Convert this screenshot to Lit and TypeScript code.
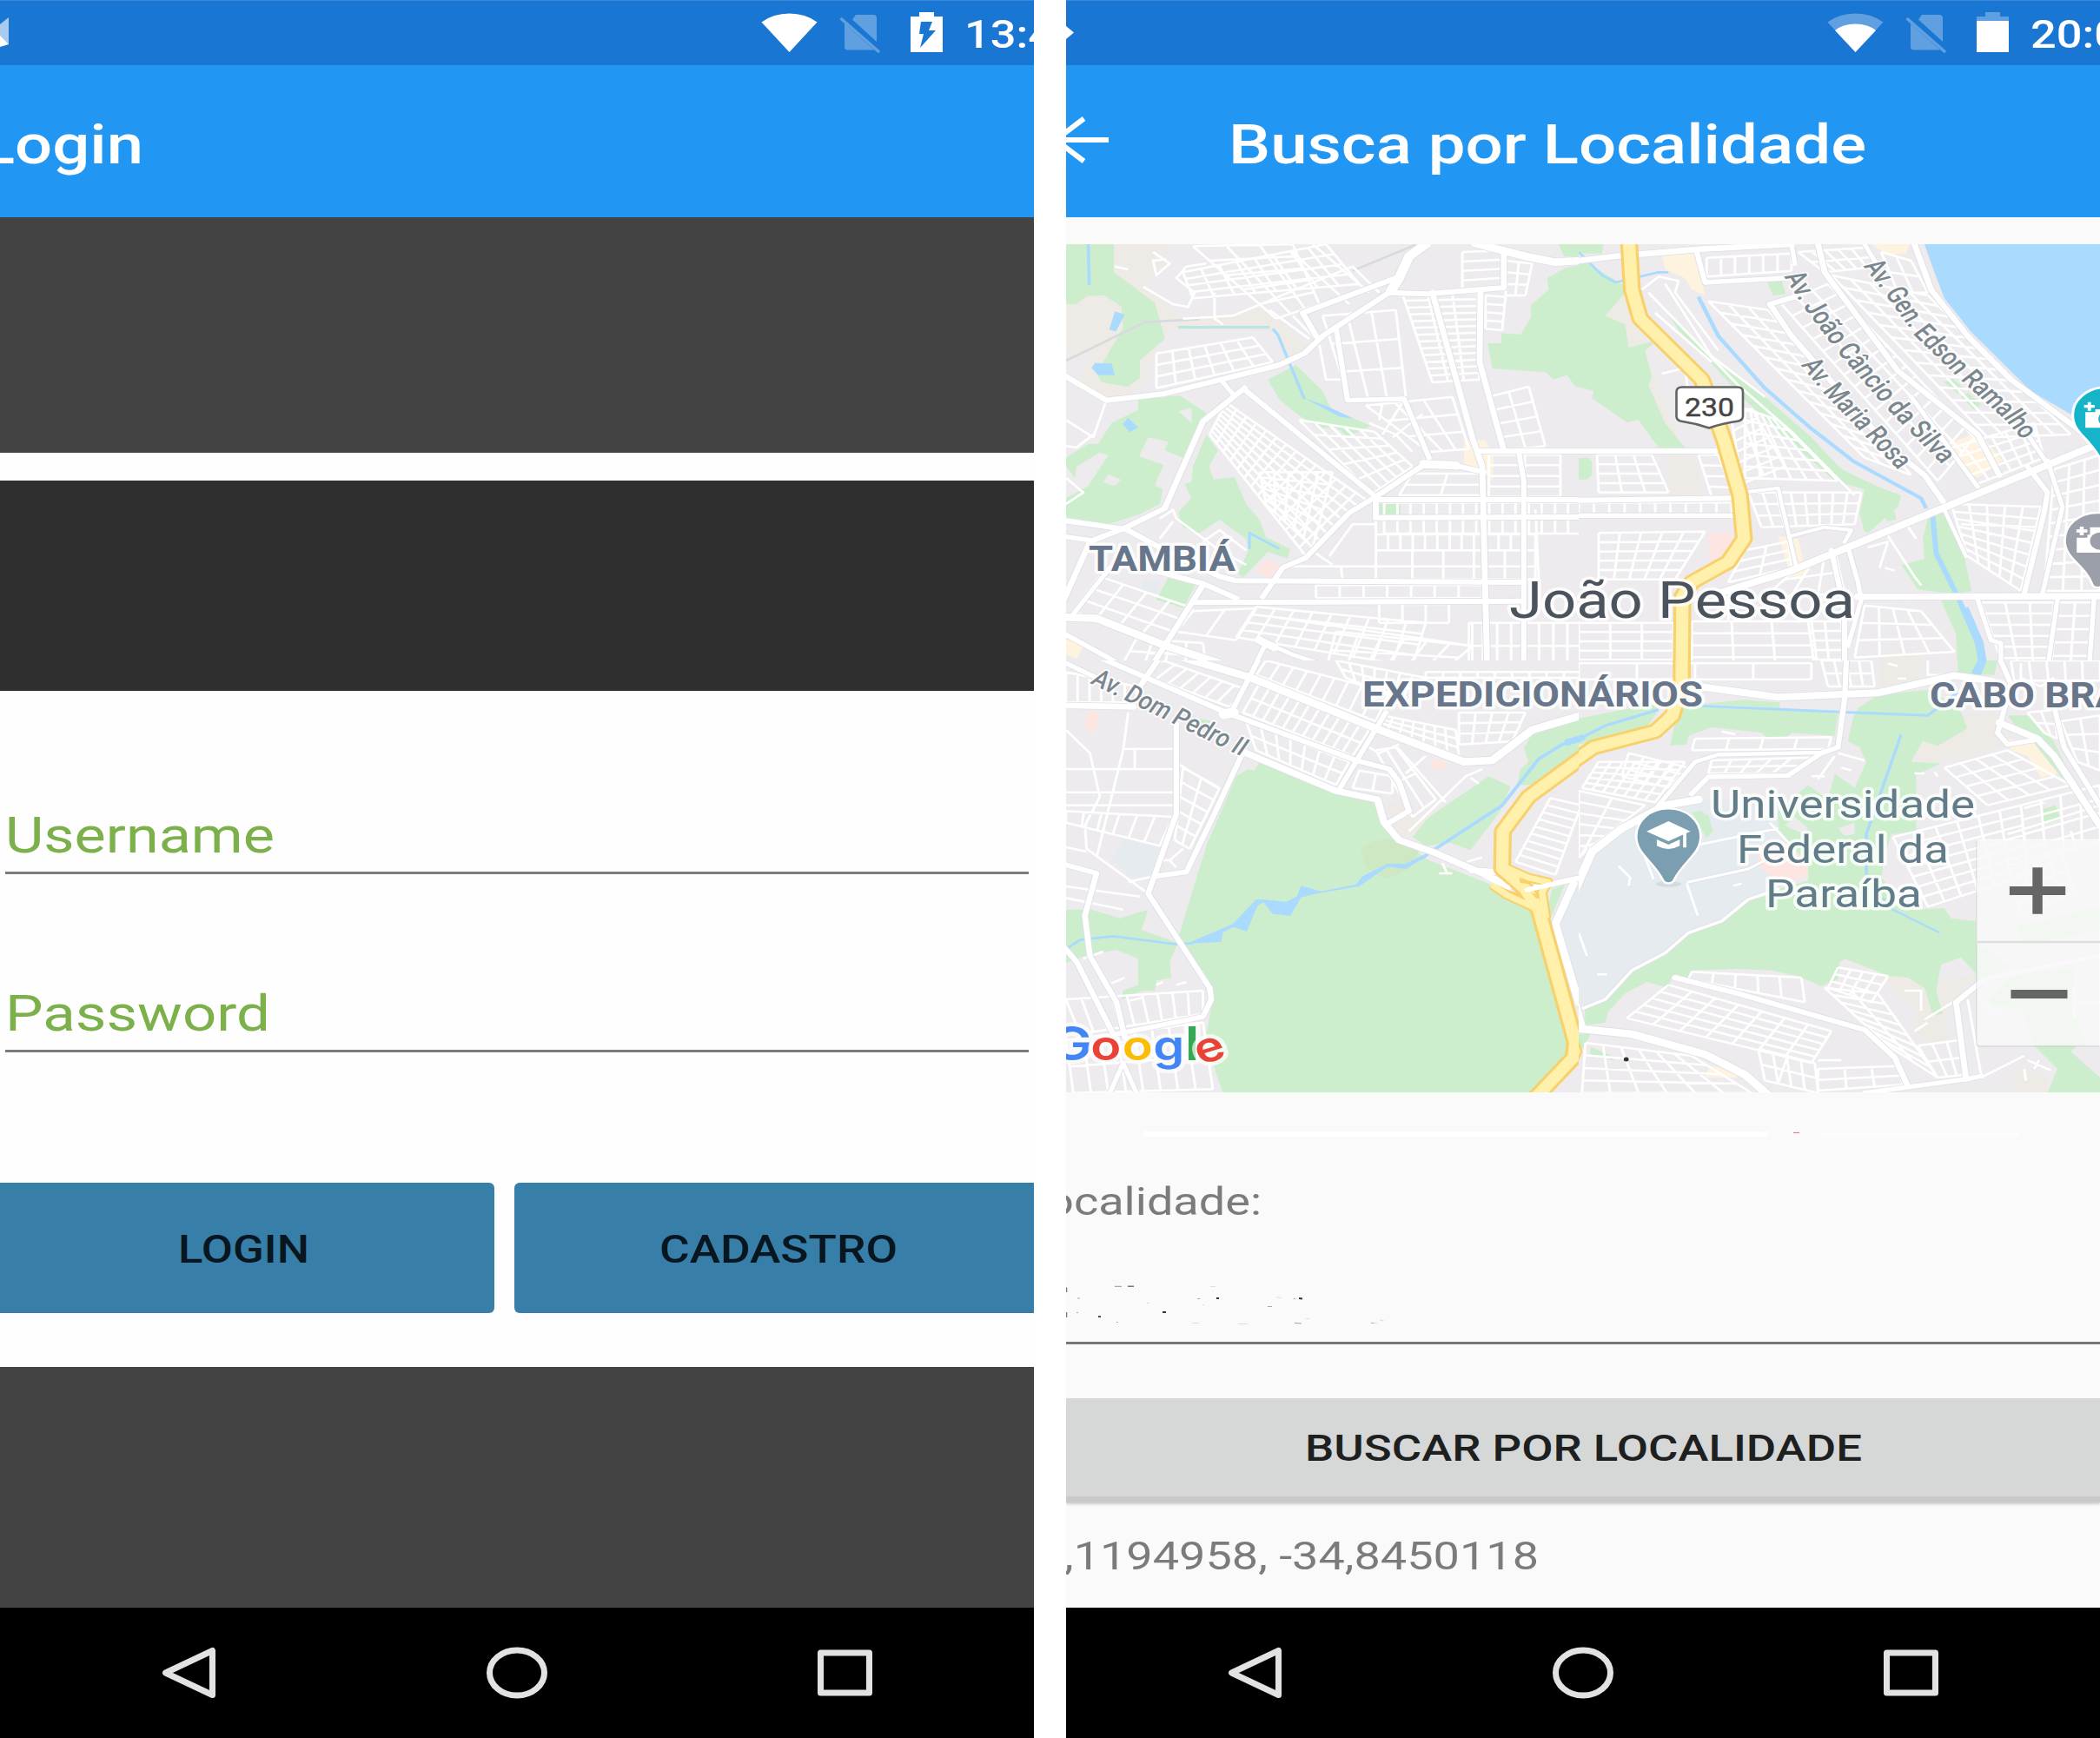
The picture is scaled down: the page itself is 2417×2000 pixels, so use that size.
import { LitElement, html, svg, css } from "lit";
import { customElement, property } from "lit/decorators.js";

/* ---------- street-map geometry ---------- */

type Shape = [string, string]; // fill, points
type Line = [number, string]; // width, points
type Quad = number[]; // 4 corners, rows, columns

interface Tile {
  x: number;
  y: number;
  areas: Shape[];
  water: Line[];
  highway: string[];
  roads: Line[];
  lanes: string[];
  grids: Quad[];
}

const GREEN = "#cdeecd";
const SAND = "#eeebe6";
const SEA = "#abdaff";
const CAMPUS = "#e5ebee";
const PINK = "#fde6e1";
const PEACH = "#fef3df";

const gridPath = (q: Quad): string => {
  const [ax, ay, bx, by, cx, cy, dx, dy, rows, cols] = q;
  const at = (u: number, v: number) => {
    const x = (1 - v) * ((1 - u) * ax + u * bx) + v * ((1 - u) * dx + u * cx);
    const y = (1 - v) * ((1 - u) * ay + u * by) + v * ((1 - u) * dy + u * cy);
    return `${x.toFixed(0)} ${y.toFixed(0)}`;
  };
  let d = "";
  for (let i = 0; i <= rows; i++) d += `M${at(0, i / rows)}L${at(1, i / rows)}`;
  for (let j = 0; j <= cols; j++) d += `M${at(j / cols, 0)}L${at(j / cols, 1)}`;
  return d;
};

const TILES: Tile[] = [
  {
    x: 1220, y: 270,
    areas: [
      [SAND, "162,33 320,33 320,100 250,180 330,240 370,290 520,270 620,250 740,380 700,440 650,335 330,325 300,370 260,500 220,545 140,560 50,500 95,430 140,400 18,430 18,240 100,200"],
      [GREEN, "18,33 162,33 162,130 285,235 316,360 240,435 240,495 205,525 125,510 110,480 190,320 185,250 135,210 80,212 50,240 18,240"],
      [GREEN, "235,570 360,555 440,615 400,720 370,770 315,745 325,715 265,700 238,765 312,795 285,865 310,880 300,930 240,965 150,998 18,975 18,910 85,868 145,762 120,752 50,800 45,840 18,800 18,770 85,722 115,722 155,650 235,605"],
      ["#edebee", "355,610 395,597 397,650"],
      ["#edebee", "145,828 183,845 165,868 130,855"],
      [GREEN, "440,690 475,745 448,800 462,845 525,838 560,930 600,985 620,1045 692,1085 685,1118 625,1095 580,1150 550,1185 535,1170 567,1090 560,1050 480,985 420,1030 370,1010 355,960 395,910 375,860 395,855 400,800"],
      [GREEN, "625,500 710,450 790,540 815,600 935,660 865,698 830,665 780,668 720,625 660,570"],
      [GREEN, "960,930 1024,930 1024,968 960,968"],
      [GREEN, "325,1185 408,1210 370,1290 290,1260"],
      [GREEN, "1568,105 1520,115 1465,150 1470,190 1415,245 1418,285 1385,345 1328,340 1328,375 1287,375 1300,462 1460,475 1485,500 1525,485 1550,525 1568,530"],
      [GREEN, "1500,33 1568,33 1568,75 1515,75"],
      [SEA, "165,265 195,275 168,335 148,328"],
      [SEA, "105,443 155,445 165,485 115,485 95,460"],
      [SEA, "205,632 235,665 210,682 188,655"],
      [SEA, "735,565 800,590 885,637 840,628"],
      [PINK, "625,1118 662,1145 630,1185 590,1160"],
      [PEACH, "1215,710 1280,710 1305,770 1300,850 1280,830 1215,790"],
      [PEACH, "18,1400 40,1385 75,1410 50,1465 18,1450"],
      [CAMPUS, "250,1190 300,1195 290,1240 245,1250"],
    ],
    water: [
      [10, "85,33 88,175"],
      [8, "570,1085 570,1030 660,1085"],
      [9, "640,325 655,345 735,568"],
    ],
    highway: [],
    roads: [
      [18, "18,490 140,572 310,550 660,450 735,410 790,350 990,200 1100,205 1335,183 1335,60"],
      [30, "995,195 1020,150 1050,75 1100,33"],
      [18, "1010,150 730,270 770,350"],
      [26, "1250,30 1400,75 1490,95 1568,90"],
      [18, "555,530 430,645 315,945 200,1010 90,1060 0,1290"],
      [18, "0,985 200,1018 300,1080 480,1180 530,1195 1390,1200"],
      [16, "0,1040 90,1055"],
      [17, "555,535 950,905 870,960 740,1115 670,1150 610,1250"],
      [18, "950,905 1100,790"],
      [28, "1095,792 1190,797"],
      [18, "1190,797 1275,820"],
      [18, "950,915 1568,915"],
      [18, "950,905 950,977 1568,975"],
      [16, "830,320 865,572 1035,567 1110,770"],
      [18, "1120,200 1240,700 1270,800 1285,1500"],
      [18, "1265,190 1262,440 1335,745"],
      [18, "1265,747 1568,747"],
      [16, "1380,750 1395,850 1395,1500"],
      [18, "400,1270 1390,1265"],
      [18, "430,1210 270,1500"],
      [18, "300,1165 430,1205 530,1255"],
      [26, "0,1320 110,1325 320,1420 560,1510"],
      [16, "0,1370 200,1495"],
      [14, "150,1150 40,1310"],
      [14, "580,1500 620,1410 700,1450 830,1500"],
      [26, "600,1400 645,1425"],
      [14, "490,510 520,550"],
    ],
    lanes: [
      "250,180 340,240 385,250 405,200 350,150 380,110 440,100",
      "370,290 520,280 740,175 880,110", "465,200 465,290 490,310",
      "630,260 750,360", "700,280 760,350", "780,380 800,500 860,500",
      "18,640 100,700 140,570", "18,730 50,735 100,690", "18,840 70,890 18,930",
      "280,60 330,100 290,140 280,90 320,85", "165,110 205,120", "880,110 960,200",
      "300,980 340,950 350,980 480,1090 560,1140", "340,990 300,1050", "430,1060 480,1020 560,1090",
      "810,1110 880,1000 950,1000", "670,1145 1440,1145", "845,1145 850,1195", "770,1100 820,1140",
      "950,990 950,1190", "700,60 870,240", "760,33 930,200",
      "930,650 1010,690 1060,750", "970,580 960,640", "1030,580 970,690", "1090,620 1000,700",
      "1430,950 1440,1190", "1240,1340 1240,1500", "640,1320 1240,1420",
    ],
    grids: [
      [370, 130, 800, 33, 900, 170, 400, 220, 4, 8],
      [400, 40, 700, 33, 780, 240, 650, 290, 5, 3],
      [290, 410, 580, 355, 640, 440, 290, 530, 3, 6],
      [500, 580, 920, 915, 740, 1110, 450, 690, 8, 14],
      [600, 820, 820, 820, 760, 1080, 620, 930, 6, 5],
      [720, 640, 945, 680, 1060, 800, 940, 895, 5, 5],
      [1030, 205, 1255, 200, 1262, 500, 1120, 510, 13, 3],
      [790, 280, 1010, 260, 1040, 560, 870, 570, 3, 3],
      [920, 590, 1180, 560, 1230, 740, 1110, 750, 3, 3],
      [1290, 560, 1410, 525, 1460, 730, 1340, 745, 4, 2],
      [1210, 60, 1330, 55, 1330, 180, 1210, 190, 4, 1],
      [1340, 90, 1420, 100, 1400, 210, 1340, 210, 3, 2],
      [1280, 210, 1340, 215, 1330, 330, 1280, 325, 4, 1],
      [1060, 825, 1270, 825, 1270, 900, 1020, 900, 2, 2],
      [1290, 760, 1505, 760, 1505, 905, 1290, 905, 4, 2],
      [975, 925, 1568, 925, 1568, 1032, 975, 1032, 2, 15],
      [950, 1035, 1430, 1035, 1430, 1090, 950, 1090, 1, 13],
      [1060, 1090, 1430, 1090, 1430, 1190, 1060, 1190, 1, 4],
      [770, 1210, 1270, 1210, 1270, 1255, 770, 1255, 1, 7],
      [590, 1285, 1100, 1340, 1060, 1490, 530, 1390, 4, 9],
      [830, 1370, 1240, 1420, 1160, 1500, 800, 1500, 2, 6],
      [1230, 1340, 1568, 1340, 1568, 1500, 1230, 1500, 2, 8],
      [120, 1180, 400, 1290, 310, 1410, 40, 1300, 3, 4],
      [400, 1300, 590, 1290, 530, 1400, 350, 1370, 1, 2],
      [230, 1395, 430, 1410, 440, 1500, 190, 1480, 2, 4],
      [960, 1275, 1170, 1275, 1170, 1340, 960, 1340, 1, 3],
    ],
  },
  {
    x: 1817, y: 270,
    areas: [
      [SAND, "140,180 80,280 140,310 140,370 170,400 200,380 220,490 205,515 280,700 300,700 200,400 250,360 180,260"],
      [GREEN, "0,80 130,170 140,200 80,280 140,310 150,390 235,365 200,400 220,490 210,520 260,650 320,735 240,735 180,640 145,648 40,565 45,540 0,525"],
      [GREEN, "0,33 75,33 70,65 0,65"],
      [GREEN, "250,240 400,430 560,560 700,700 790,810 900,870 970,900 960,940 870,1030 858,1020 845,960 860,880 770,850 640,720 490,560 380,420 300,330"],
      [GREEN, "920,960 950,955 955,985 925,990"],
      [GREEN, "1050,980 1100,950 1150,1060 1182,1230 1130,1240 1020,1225 970,1140 1040,1120 1035,1050"],
      [GREEN, "1090,1262 1150,1262 1205,1400 1215,1500 1140,1500 1135,1380"],
      [GREEN, "565,155 610,155 622,205 585,210"],
      [GREEN, "1100,510 1125,497 1160,530 1140,548"],
      [GREEN, "1150,560 1170,545 1210,585 1190,605"],
      [GREEN, "0,770 30,770 40,785 40,830 25,845 0,845"],
      [SAND, "1568,680 1470,600 1340,500 1170,300 1080,200 1040,33 1060,33"],
      [SEA, "1040,33 1568,33 1568,690 1480,620 1360,540 1180,335 1100,220 1070,130"],
      [PEACH, "250,70 350,65 380,210 340,190 320,150 260,120"],
      [PEACH, "880,33 995,33 985,65 930,70"],
      [PEACH, "1120,720 1200,680 1275,780 1200,840 1150,800"],
      [PEACH, "600,1040 660,1050 685,1170 640,1190"],
      [PINK, "388,1035 460,1030 465,1080 395,1130"],
      [SAND, "270,765 350,765 375,895 270,900"],
      [SAND, "905,1445 1040,1440 1040,1500 905,1500"],
    ],
    water: [
      [12, "360,215 420,350 560,530 700,670 830,785 1030,910 1045,945"],
      [16, "1065,970 1075,1100 1140,1250 1195,1390"],
      [26, "1160,1290 1205,1410 1215,1480 1200,1510"],
      [8, "0,60 70,140 110,165 240,130 270,130"],
    ],
    highway: ["150,0 160,190 185,290 370,500 410,620 440,720 485,900 497,1050 450,1130 340,1200 312,1250 310,1520"],
    roads: [
      [20, "0,90 130,72"], [20, "180,68 370,50 640,33"],
      [16, "355,60 380,165 620,150"],
      [18, "0,747 410,747"], [18, "0,917 470,910"], [16, "0,970 470,970"],
      [18, "650,215 575,240 640,350 930,730 1040,830 1095,920"],
      [14, "640,33 650,100"],
      [18, "720,33 740,130 960,470 1200,690 1265,830"],
      [14, "860,33 900,110"],
      [18, "1010,33 1060,190 1170,350 1300,500 1500,670 1550,720"],
      [24, "1568,720 1210,890 640,1160 430,1235"],
      [22, "840,1250 1568,1248"],
      [12, "495,890 600,875 655,1150"],
      [12, "640,1040 740,1010 820,1020 800,1060"],
      [16, "760,1090 800,1300 800,1500"], [14, "810,1080 840,1200 850,1260 810,1420"],
      [16, "1350,800 1410,890 1400,960 1340,1240"],
      [14, "1410,780 1455,940 1395,1240"],
      [14, "1350,690 1410,790"],
      [12, "1100,950 1165,1110"], [14, "1200,1260 1240,1400 1270,1410 1270,1500"],
      [14, "1440,1260 1410,1500"], [14, "1550,1260 1535,1500"],
      [14, "1000,560 1200,870"],
    ],
    lanes: [
      "190,190 240,145 300,160 290,200 420,400", "260,170 400,420 560,560", "230,270 400,440",
      "210,200 480,520 640,680 830,900", "250,480 320,460 340,640", "930,1040 1010,1180 1030,1210", "980,990 1015,1050",
      "905,1150 930,1060 870,1080", "450,1250 450,1330", "920,1150 950,1160", "1150,1000 1400,1010",
    ],
    grids: [
      [385, 80, 640, 65, 640, 125, 385, 145, 1, 6],
      [660, 60, 860, 45, 900, 110, 740, 130, 2, 5],
      [910, 60, 1000, 90, 1050, 200, 960, 200, 2, 2],
      [760, 140, 1050, 210, 1480, 690, 1230, 700, 13, 5],
      [610, 240, 750, 170, 1190, 700, 1080, 850, 15, 3],
      [390, 230, 570, 260, 1000, 830, 860, 770, 14, 3],
      [500, 600, 600, 640, 780, 850, 500, 840, 6, 6],
      [460, 640, 520, 600, 620, 800, 490, 860, 6, 2],
      [510, 890, 850, 890, 830, 1000, 550, 1010, 3, 8],
      [55, 760, 220, 760, 270, 890, 60, 890, 4, 3],
      [0, 925, 460, 925, 460, 965, 0, 965, 1, 10],
      [60, 1030, 380, 1025, 290, 1190, 60, 1190, 5, 5],
      [0, 1340, 285, 1340, 285, 1500, 0, 1500, 5, 3],
      [340, 1335, 700, 1335, 720, 1500, 340, 1500, 4, 3],
      [690, 1335, 790, 1335, 800, 1500, 710, 1500, 5, 2],
      [860, 1280, 1030, 1300, 1130, 1440, 830, 1460, 3, 4],
      [1120, 930, 1390, 940, 1330, 1230, 1170, 1110, 7, 5],
      [1430, 810, 1568, 760, 1568, 1230, 1400, 1230, 9, 3],
      [1210, 1270, 1430, 1270, 1410, 1500, 1280, 1500, 6, 3],
      [1440, 1270, 1545, 1270, 1535, 1500, 1420, 1500, 5, 2],
      [1110, 740, 1370, 650, 1400, 770, 1200, 860, 4, 6],
      [500, 1090, 630, 1060, 640, 1150, 450, 1200, 3, 2],
      [680, 1130, 770, 1090, 800, 1240, 560, 1250, 2, 3],
      [360, 760, 420, 760, 470, 910, 400, 905, 4, 1],
    ],
  },
  {
    x: 1220, y: 760,
    areas: [
      [GREEN, "600,350 840,460 960,490 1000,600 1110,690 1290,770 1420,870 1530,1300 1535,1360 1420,1493 490,1493 465,1410 440,1290 460,1170 460,1130 355,960 440,640 530,400 565,375 585,380"],
      ["#cfe8c4", "905,650 940,625 1000,615 1080,660 1050,720 980,755 920,715"],
      [SAND, "980,480 1100,540 1110,560 1050,610 1000,580"],
      [GREEN, "1060,610 1110,540 1290,400 1355,435 1325,520 1235,655 1175,630 1100,640"],
      [GREEN, "1568,200 1568,330 1430,430 1375,430 1385,375 1410,350 1395,300 1425,250"],
      [GREEN, "18,860 95,860 180,890 265,860 245,930 355,975 330,1040 335,1095 290,1105 285,1140 250,1140 185,1170 190,1140 235,1120 235,1030 170,1000 75,1020 18,1045"],
      [GREEN, "400,195 455,210 430,230"],
      [GREEN, "1480,790 1520,770 1480,880 1465,860"],
      [CAMPUS, "195,612 300,640 270,750 220,750 155,690"],
      [CAMPUS, "1568,780 1540,780 1490,910 1560,1170 1568,1170"],
      [PINK, "85,175 120,180 105,250 68,230"],
      [PINK, "1120,335 1170,355 1145,380 1115,365"],
      [SEA, "380,978 520,910 590,825 610,825 680,833 712,815 725,778 785,797 890,773 910,745 985,702 1040,702 1095,670 1095,682 1040,720 985,712 900,780 785,802 725,818 693,882 640,875 612,835 595,845 562,935 520,920 490,940 485,972"],
    ],
    water: [
      [8, "0,1010 60,965 160,952 350,980 400,976"],
      [11, "1085,685 1130,650 1330,500 1440,340 1510,290 1568,270"],
      [22, "1520,285 1568,268"],
    ],
    highway: [
      "1600,310 1410,470 1332,590 1330,720 1400,790 1440,860 1550,1320 1545,1370 1430,1510",
      "1340,715 1410,750 1468,765 1450,800 1462,890",
      "1300,775 1345,810 1430,855",
    ],
    roads: [
      [26, "370,-10 575,60 940,230 1215,350 1300,345 1420,240 1568,190"],
      [18, "120,-10 270,65 500,180 890,345 990,375 1020,420 1050,520 990,560"],
      [16, "0,0 110,60"],
      [22, "560,320 830,450 955,480 975,560 1020,620 1130,665 1290,745 1350,780"],
      [20, "1240,725 1315,730"], [18, "1395,790 1568,750"],
      [16, "600,-10 510,190"], [34, "495,185 520,180"], [16, "980,180 840,445"], [18, "300,-10 240,90"],
      [20, "0,155 220,160"],
      [17, "350,220 350,530 265,805 450,1130 455,1170 430,1230 170,1290"],
      [17, "545,330 460,540 380,730 285,745"],
      [17, "0,700 110,735 75,880 90,1020 170,1180 195,1300"],
      [17, "0,975 50,1040 160,1290"],
      [24, "1545,770 1490,910 1560,1180"],
      [14, "190,1390 150,1493"], [14, "190,1390 230,1493"],
    ],
    lanes: [
      "18,240 90,320 120,470 75,570 80,650 265,805", "205,180 190,310 110,680", "18,780 240,815",
      "18,820 190,860", "18,500 340,500", "18,455 350,455", "18,375 345,375", "190,305 340,305 M225,305 225,375",
      "205,765 280,745", "18,645 80,660", "310,690 330,690 370,650 M330,690 350,715",
      "1050,590 1220,400 1270,375", "1235,405 1260,425", "1150,700 1165,735 M1140,735 1180,735", "1225,695 1270,680",
      "70,1030 130,1005", "155,1115 195,1095", "290,1120 310,1110", "350,1120 380,1110", "210,1175 245,1165",
      "360,360 480,445", "1015,300 1160,490", "930,300 960,320 1020,290", "1100,330 1040,390",
    ],
    grids: [
      [310, 0, 560, 100, 510, 160, 250, 50, 1, 7],
      [600, 80, 930, 240, 880, 330, 550, 180, 2, 11],
      [560, 210, 870, 350, 830, 430, 590, 310, 2, 7],
      [620, 0, 990, 110, 950, 210, 590, 50, 1, 9],
      [830, 0, 1100, 60, 1060, 150, 860, 60, 2, 7],
      [1100, 40, 1568, 40, 1568, 60, 1100, 60, 1, 9],
      [970, 190, 1190, 240, 1200, 330, 950, 225, 3, 7],
      [1200, 180, 1400, 180, 1360, 280, 1200, 290, 3, 4],
      [18, 520, 340, 540, 300, 640, 18, 560, 1, 6],
      [370, 370, 480, 440, 390, 650, 345, 620, 5, 2],
      [18, 40, 230, 90, 230, 145, 18, 145, 1, 6],
      [1475, 475, 1568, 500, 1490, 740, 1370, 695, 9, 1],
      [18, 1170, 430, 1140, 430, 1220, 60, 1290, 1, 9],
      [18, 1310, 430, 1250, 460, 1480, 40, 1493, 2, 8],
      [950, 310, 1010, 300, 1130, 480, 1060, 540, 2, 2],
      [900, 380, 1000, 400, 1000, 460, 880, 440, 1, 2],
    ],
  },
  {
    x: 1817, y: 760,
    areas: [
      [CAMPUS, "0,800 60,640 170,540 370,480 600,490 620,600 690,700 600,790 500,830 430,900 330,940 260,1010 150,1080 80,1170 20,1200 0,1170"],
      [GREEN, "0,200 220,150 240,170 200,240 0,290"],
      [GREEN, "300,160 600,165 780,185 770,260 640,250 620,270 570,270 550,250 400,230 330,260 325,290 275,295"],
      [GREEN, "370,150 500,135 605,145 605,165"],
      [SAND, "1140,190 1250,180 1290,290 1180,330 1000,355 1040,280 1090,290 1170,235"],
      [SAND, "905,0 1030,0 1020,80 905,90"],
      [SAND, "930,1085 1065,1120 1200,1080 1100,1220 1110,1320 1050,1320 1010,1280 1020,1200 930,1130"],
      [SAND, "1310,1400 1410,1440 1410,1493 1310,1493"],
      [GREEN, "840,165 900,120 1060,100 1150,180 1170,235 1080,295 1035,278 1000,350 1090,355 1015,395 1015,590 940,600 920,680 910,750 1000,860 1100,855 1120,890 1195,900 1195,1080 1150,1025 1090,1050 1075,1140 1095,1220 1065,1225 1040,1130 990,1095 935,1090 800,1030 785,1040 780,1100 730,1125 660,1090 580,1070 480,1065 340,1070 330,1100 280,1090 270,1130 205,1110 140,1150 90,1210 80,1250 20,1260 18,1200 80,1170 160,1070 260,1010 330,940 430,900 500,830 600,790 690,760 690,700 640,640 600,580 600,520 690,430 750,480 770,390 830,440 865,350 845,300 810,280 825,200"],
      ["#edebee", "650,540 690,580 680,600 620,570"],
      ["#edebee", "780,580 830,560 830,600 800,605"],
      [GREEN, "340,525 365,518 390,535 405,590 385,612"],
      [GREEN, "1290,190 1350,190 1430,280 1490,430 1568,540 1568,590 1500,470 1400,330 1330,250"],
      [GREEN, "1140,0 1260,0 1250,50 1140,45"],
      [GREEN, "1390,515 1435,500 1450,550 1400,565"],
      [GREEN, "1370,1330 1500,1330 1480,1350 1568,1440 1568,1493 1410,1493 1440,1410"],
      [GREEN, "1320,920 1568,850 1568,930 1400,970 1330,970"],
      [GREEN, "1195,970 1300,1060 1195,1110"],
      [GREEN, "1300,1090 1490,1060 1480,1200 1530,1330 1370,1330 1330,1200 1220,1190"],
      [GREEN, "35,1335 100,1365 105,1382 35,1360"],
      [GREEN, "0,1290 35,1290 15,1340 0,1340"],
      [PINK, "540,640 620,630 690,700 690,750 600,760 540,710"],
      [PEACH, "1290,270 1370,285 1440,390 1390,405 1350,330 1300,310"],
      [PEACH, "395,1400 450,1410 480,1440 380,1440"],
      [SEA, "1200,0 1228,0 1210,50 1180,45"],
    ],
    water: [
      [9, "370,157 780,178 1050,190 1140,110"],
      [10, "0,272 80,225 240,170"],
      [20, "-5,275 15,263"],
      [9, "970,255 865,600 865,740"],
      [7, "915,820 945,860 1085,940"],
    ],
    highway: ["310,-30 310,80 282,190 230,245 45,300 -30,360", "-20,1300 -5,1350 -20,1390"],
    roads: [
      [24, "360,90 600,127 900,112 1130,52 1240,70"],
      [16, "805,0 800,130 780,300 730,320"],
      [16, "730,320 630,397 390,402 340,460"],
      [14, "780,300 730,318 420,325 350,350 240,500"],
      [26, "360,480 260,500 130,580 40,660 -10,790"],
      [16, "1265,-10 1300,80 1270,210 1260,250 1290,290 1370,275"],
      [22, "1265,215 1380,270 1430,330 1568,570"],
      [16, "1430,160 1460,300 1568,500"],
      [26, "-10,1190 10,1272 160,1290 380,1360 500,1430 580,1510"],
      [18, "290,1095 480,1150 860,1275 950,1370 990,1470"],
      [16, "860,1493 1170,1445 1210,1435"],
      [18, "1165,1445 1135,1180 1220,1100 1568,1020"],
      [10, "15,1200 80,1170 160,1070 260,1010 330,940 430,900 510,825 600,790"],
      [9, "330,765 510,720 560,690"],
    ],
    lanes: [
      "300,650 600,580", "200,680 225,755", "575,560 640,640", "120,710 155,750 150,778", "325,770 358,880", "0,940 25,1020",
      "55,1084 85,1084", "465,778 490,770", "780,320 860,345", "770,330 720,410 M700,400 740,400", "430,245 470,255",
      "790,370 820,380", "1010,390 1040,390 M1070,385 1080,400", "1290,600 1568,500", "1340,510 1400,490",
      "1480,590 1500,660", "1040,1240 1140,1170", "1010,1280 1050,1250", "1210,1440 1340,1365",
      "1350,1380 1420,1415 M1385,1380 1370,1410", "1340,1410 1345,1450", "980,1140 1030,1140 1030,1210", "1490,1120 1490,1240 M1490,1180 1568,1180",
      "720,1380 790,1380", "630,1360 600,1460", "1170,1170 1210,1430", "1200,1160 1260,1220", "1050,0 1050,50 1100,50",
      "930,10 960,20", "960,62 985,62", "1330,10 1330,60 1390,90 1430,60",
    ],
    grids: [
      [60, 350, 320, 350, 230, 490, 10, 440, 5, 7],
      [150, 320, 330, 370, 270, 440, 130, 400, 3, 4],
      [0, 450, 200, 500, 20, 660, 0, 680, 6, 2],
      [400, 345, 700, 335, 630, 390, 390, 390, 2, 5],
      [350, 270, 760, 265, 750, 305, 340, 310, 1, 4],
      [270, 1120, 760, 1280, 700, 1390, 145, 1235, 5, 7],
      [340, 1075, 670, 1095, 680, 1180, 330, 1100, 1, 5],
      [740, 1130, 900, 1150, 1080, 1440, 930, 1330, 8, 2],
      [20, 1320, 340, 1365, 520, 1493, 10, 1493, 4, 6],
      [540, 1340, 710, 1390, 720, 1493, 560, 1450, 2, 4],
      [720, 1410, 960, 1400, 975, 1465, 720, 1485, 2, 3],
      [780, 1060, 930, 1090, 880, 1180, 750, 1130, 3, 4],
      [945, 610, 1330, 500, 1350, 740, 1050, 850, 7, 6],
      [1330, 500, 1568, 430, 1568, 620, 1350, 700, 4, 4],
      [1100, 370, 1290, 310, 1480, 430, 1230, 500, 4, 4],
      [1300, 0, 1568, 0, 1568, 70, 1310, 70, 1, 5],
      [1350, 180, 1430, 170, 1440, 270, 1400, 250, 2, 2],
      [1450, 210, 1568, 190, 1568, 380, 1500, 350, 3, 2],
      [0, 10, 700, 10, 700, 65, 0, 65, 1, 4],
      [730, 0, 880, 0, 890, 90, 750, 90, 2, 4],
      [1290, 710, 1450, 650, 1490, 800, 1330, 880, 4, 4],
      [1020, 1330, 1150, 1310, 1165, 1430, 1080, 1440, 2, 3],
    ],
  },
];

const poly = (pts: string) => "M" + pts;

@customElement("city-map")
export class CityMap extends LitElement {
  static styles = css`
    :host { display: block; width: 1190px; height: 976px; }
    .canvas { display: block; font-family: Roboto, "Liberation Sans", sans-serif; }
    .line { fill: none; stroke-linejoin: round; }
    .lane { stroke: #fff; stroke-width: 7.5; }
    .shade { stroke: #dfdfe6; }
    .road { stroke: #fff; stroke-linecap: round; }
    .casing { stroke: #f8d06c; stroke-width: 54; }
    .core { stroke: #fff1ac; stroke-width: 37; }
    .casing-ramp { stroke: #f8d06c; stroke-width: 32; }
    .core-ramp { stroke: #fff1ac; stroke-width: 20; }
    .water { stroke: #abdaff; }
    .label { paint-order: stroke; stroke: #ffffffd0; stroke-width: 7; stroke-linejoin: round; }
    .district { font-weight: 700; font-size: 40.5px; fill: #67768a; }
    .city { font-size: 59px; fill: #4b535d; }
    .place { font-size: 45px; fill: #627d89; }
    .street { font-size: 28.5px; font-weight: 500; fill: #7b878f; stroke-width: 4; }
    .shield { font-size: 29px; font-weight: 400; fill: #444; stroke: #444; stroke-width: 0.4; }
    .brand { font-family: Inter, Roboto, sans-serif; font-weight: 600; font-size: 48px; stroke: #ffffffb0; stroke-width: 9; paint-order: stroke; stroke-linejoin: round; }
    .brand-tall { font-size: 53px; }
  `;

  private tile(t: Tile, i: number) {
    return svg`<g clip-path="url(#tile)" transform="translate(${t.x} ${t.y}) scale(0.382653 0.333333)">
      <rect width="1575" height="1570" fill="#edebee"></rect>
      ${t.areas.map(([f, p]) => svg`<polygon points=${p} fill=${f}></polygon>`)}
      ${i === 0 ? svg`
        <path class="line" d="M18 435L255 302L420 292M880 125L1070 35" stroke="#d8dadd" stroke-width="8"></path>
        <path class="line" d="M355 320H630" stroke="#b9e5e3" stroke-width="10"></path>` : ""}
      <path class="line lane" d=${t.grids.map(gridPath).join("") + t.lanes.map(poly).join("")}></path>
      ${t.water.map(([w, p]) => svg`<path class="line water" stroke-width=${w} d=${poly(p)}></path>`)}
      ${t.roads.map(([w, p]) => svg`<path class="line shade" stroke-width=${w + 5} d=${poly(p)}></path>`)}
      ${t.roads.map(([w, p]) => svg`<path class="line road" stroke-width=${w} d=${poly(p)}></path>`)}
      ${t.highway.map((p, k) => svg`<path class=${k ? "line casing-ramp" : "line casing"} d=${poly(p)}></path>`)}
      ${t.highway.map((p, k) => svg`<path class=${k ? "line core-ramp" : "line core"} d=${poly(p)}></path>`)}
      ${i === 2 ? svg`
        <path d="M1380 750L1412 765L1408 772L1385 768Z M1345 795L1375 800L1388 822Z M1415 800L1440 812L1435 824Z" fill="#f8d06c"></path>
        <path class="line road" stroke-width="16" d="M1280 745L1345 782M1405 792L1560 752"></path>` : ""}
    </g>`;
  }

  private label(cls: string, text: string, x: number, y: number, w: number) {
    return svg`<text class="label ${cls}" x=${x} y=${y} textLength=${w} lengthAdjust="spacingAndGlyphs">${text}</text>`;
  }

  private street(id: string, text: string, len: number) {
    return svg`<text class="label street"><textPath href="#${id}" textLength=${len} lengthAdjust="spacingAndGlyphs">${text}</textPath></text>`;
  }

  render() {
    return html`<svg class="canvas" width="1190" height="976" viewBox="1227 281 1190 976">
      <defs>
        <clipPath id="tile"><rect width="1575" height="1570"></rect></clipPath>
        <path id="dom" d="M1045 786L1200 876"></path>
        <path id="joao" d="M1711 318L1729 352L1763 406L1811 472L1870 543"></path>
        <path id="edson" d="M1787 306L1809 340L1838 388L1883 440L1922 482L1952 522"></path>
        <path id="maria" d="M1727 420L1748 451L1788 501L1830 552"></path>
      </defs>
      ${TILES.map((t, i) => this.tile(t, i))}
      <g transform="scale(1.2 1)">
        ${this.street("dom", "Av. Dom Pedro II", 168)}
        ${this.street("joao", "Av. João Câncio da Silva", 265)}
        ${this.street("edson", "Av. Gen. Edson Ramalho", 253)}
        ${this.street("maria", "Av. Maria Rosa", 153)}
      </g>
      ${this.label("district", "TAMBIÁ", 1253, 657, 169)}
      ${this.label("city", "João Pessoa", 1737, 711, 398)}
      ${this.label("district", "EXPEDICIONÁRIOS", 1568, 813, 392)}
      ${this.label("district", "CABO BRA", 2221, 814, 221)}
      ${this.label("place", "Universidade", 1969, 941, 304)}
      ${this.label("place", "Federal da", 1999, 992.5, 244)}
      ${this.label("place", "Paraíba", 2032, 1043.5, 180)}
      <path d="M1936 445.500H2000Q2006 445.500 2006 451V479Q2006 483 2001 484.500Q1983 487 1967 492.500Q1951 487 1934 484.500Q1929.500 483 1929.500 479V451Q1929.500 445.500 1936 445.500Z" fill="#fff" stroke="#636363" stroke-width="2.600"></path>
      <text class="shield" x="1939" y="478.500" textLength="57" lengthAdjust="spacingAndGlyphs">230</text>
      <g transform="translate(1817 760) scale(0.382653 0.333333)">
        <ellipse cx="270" cy="772" rx="38" ry="10" fill="#b9c3c9" opacity=".4"></ellipse>
        <path d="M270 511C215 511 173 553 173 607C173 668 222 690 252 755C258 774 282 774 288 755C318 690 367 668 367 607C367 553 325 511 270 511Z" fill="#7b9eb0" stroke="#fff" stroke-width="7"></path>
        <path d="M270 555L336 590L270 624L204 590Z M235 618L270 636L304 618V640Q270 662 235 640Z M314 596H324V646H314Z" fill="#fff"></path>
        <circle cx="143" cy="1377" r="7.500" fill="#333"></circle>
        <path d="M1568 617H1208Q1198 617 1198 627V1320Q1198 1330 1208 1330H1568Z" fill="#b5b5b5" opacity=".35" transform="translate(-3 4)"></path>
        <path d="M1570 617H1208Q1198 617 1198 627V1320Q1198 1330 1208 1330H1570Z" fill="#fff" opacity=".78"></path>
        <path d="M1198 972H1570" stroke="#dcdedc" stroke-width="7"></path>
        <path d="M1296 780H1365V715H1395V780H1464V810H1395V875H1365V810H1296Z M1300 1137H1470V1167H1300Z" fill="#666"></path>
      </g>
      <g transform="translate(1817 270) scale(0.382653 0.333333)">
        <path d="M1585 527C1530 527 1486 570 1486 622C1486 690 1540 700 1574 785H1600V527Z" fill="#15b4c8" stroke="#fff" stroke-width="8"></path>
        <path d="M1531 578H1541V588H1552V598H1541V608H1531V598H1520V588H1531Z M1524 613H1554V603H1580V667H1524Z" fill="#fff"></path>
        <circle cx="1590" cy="636" r="27" fill="#15b4c8"></circle>
        <path d="M1560 960C1505 960 1462 1002 1462 1055C1462 1120 1520 1135 1545 1208C1550 1222 1570 1222 1575 1208L1600 1150V960Z" fill="#9a9fa9" stroke="#fff" stroke-width="7"></path>
        <path d="M1507 1008H1519V1018H1530V1028H1519V1038H1507V1028H1497V1018H1507Z M1498 1046H1530V1036H1538V1010H1600V1098H1498Z" fill="#fff"></path>
        <circle cx="1568" cy="1058" r="30" fill="#9a9fa9"></circle>
      </g>
      <g transform="scale(1.2 1)">
        <text class="brand" y="1220.500"><tspan class="brand-tall" x="1008" fill="#4285f4">G</tspan><tspan x="1046" fill="#ea4335">o</tspan><tspan x="1076.500" fill="#fbbc05">o</tspan><tspan x="1106" fill="#4285f4">g</tspan><tspan class="brand-tall" x="1136.500" fill="#34a853">l</tspan><tspan x="1151.500" dy="5" rotate="-20" fill="#ea4335">e</tspan></text>
      </g>
    </svg>`;
  }
}

/* ---------- text stretched to a fixed width; the box is as tall as its capitals ---------- */

@customElement("wide-text")
export class WideText extends LitElement {
  static styles = css`
    :host { display: block; flex: none; }
    .box { display: block; overflow: visible; font-family: Roboto, "Liberation Sans", sans-serif; }
  `;
  @property() text = "";
  @property({ type: Number }) w = 100;
  @property({ type: Number }) size = 44;
  @property({ type: Number }) weight = 400;
  @property() color = "#fff";
  render() {
    const cap = this.size * 0.711;
    return html`<svg class="box" width=${this.w} height=${cap}>
      <text y=${cap} font-size=${this.size} font-weight=${this.weight} fill=${this.color} textLength=${this.w} lengthAdjust="spacingAndGlyphs">${this.text}</text>
    </svg>`;
  }
}

/* ---------- system bars ---------- */

@customElement("status-bar")
export class StatusBar extends LitElement {
  static styles = css`
    :host { display: block; height: 75px; background: #1a76d3; box-sizing: border-box; border-top: 1px solid #3b89d8; flex: none; }
    .row { display: flex; align-items: flex-start; height: 74px; }
    .edge { flex: none; width: 876px; height: 74px; display: block; }
    .wifi { margin: 14px 25px 0 0; flex: none; }
    .sim { margin: 15px 34px 0 0; flex: none; }
    .battery { margin: 13px 25px 0 0; flex: none; }
    .time { margin-top: 22px; }
  `;
  @property() time = "";
  @property({ type: Boolean }) charging = false;
  render() {
    return html`<div class="row">
      <svg class="edge" viewBox="0 0 876 74">
        ${this.charging
          ? svg`<path d="M0 27L10 19V50L0 42Z" fill="#a9cbef"></path><path d="M0 40L10 50L0 53Z" fill="#fff"></path>`
          : svg`<path d="M0 29L9 36.500L0 44Z" fill="#fff"></path>`}
      </svg>
      <svg class="wifi" width="65" height="45" viewBox="0 0 65 45">
        ${this.charging
          ? svg`<path d="M0.500 10.500Q14 0.500 32.500 0.500T64.500 10.500L32.500 45Z" fill="#fff"></path>`
          : svg`<path d="M0.500 10.500Q14 0.500 32.500 0.500T64.500 10.500L32.500 45Z" fill="#60a0e0"></path><path d="M9 20Q18 12.500 32.500 12.500T56 20L32.500 45Z" fill="#fff"></path>`}
      </svg>
      <svg class="sim" width="48" height="45" viewBox="0 0 48 45">
        <path d="M19 1H39Q43 1 43 4.500V32L15 6.500Z M6 11L40 41.500H10Q6 41.500 6 38Z" fill="#60a0e0"></path>
        <path d="M1.500 5L46 44" stroke="#60a0e0" stroke-width="3.500"></path>
      </svg>
      <svg class="battery" width="37" height="46" viewBox="0 0 37 46">
        ${this.charging
          ? svg`<path d="M0 5H10V0H27V5H37V46H0Z" fill="#fff"></path><path d="M12 11H25L21 21H29L11 41L15 25H10Z" fill="#1a76d3"></path>`
          : svg`<path d="M0 5H10V0H27V5H37V11H0Z" fill="#60a0e0"></path><path d="M0 10H37V46H0Z" fill="#fff"></path>`}
      </svg>
      <wide-text class="time" .text=${this.time} .w=${103} .size=${44.5} .weight=${500}></wide-text>
    </div>`;
  }
}

@customElement("nav-bar")
export class NavBar extends LitElement {
  static styles = css`
    :host { display: flex; flex: none; height: 150px; background: #000; align-items: center; justify-content: center; gap: 305px; }
    .icon { flex: none; display: block; }
    .stroke { fill: none; stroke: #e2e2e2; stroke-width: 7; stroke-linejoin: round; }
  `;
  render() {
    return html`
      <svg class="icon" width="72" height="60" viewBox="0 0 72 60"><path class="stroke" d="M62.500 4.500V55.500L8.500 30Z"></path></svg>
      <svg class="icon" width="72" height="60" viewBox="0 0 72 60"><ellipse class="stroke" cx="36" cy="30" rx="31.500" ry="26"></ellipse></svg>
      <svg class="icon" width="72" height="60" viewBox="0 0 72 60"><rect class="stroke" x="8.500" y="7" width="56" height="46"></rect></svg>`;
  }
}

/* ---------- application ---------- */

@customElement("app-root")
export class AppRoot extends LitElement {
  static styles = css`
    :host { display: flex; width: 2417px; height: 2000px; gap: 37px; background: #fff; overflow: hidden; }
    .phone { width: 1190px; height: 2000px; flex: none; display: flex; flex-direction: column; overflow: hidden; background: #fefefe; }
    .light { background: #fafafa; }
    .appbar { height: 175px; flex: none; box-sizing: border-box; background: #2196f3; display: flex; align-items: center; padding-top: 6px; }
    .login-title { margin-left: -24px; }
    .arrow { display: block; flex: none; margin-right: 137px; margin-bottom: 10px; }
    .block { flex: none; background: #434343; }
    .top { height: 271px; }
    .banner { height: 242px; margin-top: 32px; background: #2f2f2f; }
    .bottom { height: 277px; margin-top: auto; }
    .field { flex: none; margin: 0 6px; border-bottom: 3px solid #7b7b7b; box-sizing: border-box; display: flex; align-items: flex-end; padding-bottom: 22px; }
    .user { height: 211px; }
    .pass { height: 204.500px; }
    .buttons { display: flex; flex: none; gap: 23px; margin-top: 150.500px; height: 150px; }
    .btn { display: flex; align-items: center; justify-content: center; background: #377fa9; padding-top: 3px; box-sizing: border-box; }
    .login { width: 569px; border-radius: 0 6px 6px 0; padding-right: 8px; }
    .signup { width: 598px; border-radius: 6px 0 0 6px; padding-left: 9px; }
    .map { margin-top: 31px; flex: none; }
    .rule { display: block; flex: none; height: 50px; margin-top: 44px; }
    .caption { margin: 15.500px 0 0 -51px; }
    .entry { display: block; flex: none; box-sizing: border-box; margin-top: 78.200px; height: 71px; border-bottom: 3px solid #777; }
    .search { flex: none; box-sizing: border-box; margin-top: 62px; height: 120px; background: #d6d8d7; border-bottom: 7px solid #c9c9c9; box-shadow: 0 2px 3px #ccc; display: flex; justify-content: center; align-items: center; }
    .coords { margin: 46px 0 0 -2px; }
    .end { margin-top: auto; }
  `;

  render() {
    return html`
      <div class="phone">
        <status-bar time="13:4" charging></status-bar>
        <div class="appbar"><wide-text class="login-title" text="Login" .w=${189} .size=${63} .weight=${500}></wide-text></div>
        <div class="block top"></div>
        <div class="block banner"></div>
        <div class="field user"><wide-text text="Username" color="#7cb04b" .w=${310} .size=${57}></wide-text></div>
        <div class="field pass"><wide-text text="Password" color="#7cb04b" .w=${305} .size=${57}></wide-text></div>
        <div class="buttons">
          <div class="btn login"><wide-text text="LOGIN" color="#08161f" .w=${151} .size=${43.5} .weight=${500}></wide-text></div>
          <div class="btn signup"><wide-text text="CADASTRO" color="#08161f" .w=${274} .size=${43.5} .weight=${500}></wide-text></div>
        </div>
        <div class="block bottom"></div>
        <nav-bar></nav-bar>
      </div>
      <div class="phone light">
        <status-bar time="20:0"></status-bar>
        <div class="appbar">
          <svg class="arrow" width="50" height="60" viewBox="0 0 50 60"><path d="M49 30H-12M20.500 5.500L-12 30L20.500 54.500" fill="none" stroke="#fff" stroke-width="6"></path></svg>
          <wide-text text="Busca por Localidade" .w=${734} .size=${63} .weight=${500}></wide-text>
        </div>
        <city-map class="map"></city-map>
        <svg class="rule" width="1190" height="50" viewBox="0 0 1190 50">
          <path d="M89 1.500H803L809 2L806 7H89Z" fill="#fff"></path>
          <path d="M867 4.500H1098" stroke="#fdfdfd" stroke-width="3"></path>
          <path d="M837 2.500H844" stroke="#c98a9a" stroke-width="1.200"></path>
        </svg>
        <wide-text class="caption" text="Localidade:" color="#7b7b7b" .w=${276} .size=${44}></wide-text>
        <svg class="entry" width="1190" height="71" viewBox="0 0 1190 68">
          <path d="M0.500 5.500V11M0.500 34V40M71 4.300H78" stroke="#777" stroke-width="1.500" fill="none"></path>
          <path d="M56 4.300H64M13 18H16M12 34.500H14M58 45.500H60M151 18.500H154M262 18.500H264M232 27.500H237M263 46.300L271 47M351 46.500H354" stroke="#aaa" stroke-width="1.200" fill="none"></path>
          <path d="M37 39.200H40M111 34H115M173 18H176M268 18L272 18.500" stroke="#333" stroke-width="1.800" fill="none"></path>
          <path d="M93 23.500H96M145 46.500H153M198 47.500H209M242 16.500L248 18M354 46.500H358M361 43L366 44M276 41.500H280M157 25.500H159M166 4.500H172" stroke="#ddd" stroke-width="1" fill="none"></path>
        </svg>
        <div class="search"><wide-text text="BUSCAR POR LOCALIDADE" color="#1e1f1f" .w=${641} .size=${43} .weight=${500}></wide-text></div>
        <wide-text class="coords" text=",1194958, -34,8450118" color="#7b7b7b" .w=${546} .size=${43.5}></wide-text>
        <nav-bar class="end"></nav-bar>
      </div>`;
  }
}
